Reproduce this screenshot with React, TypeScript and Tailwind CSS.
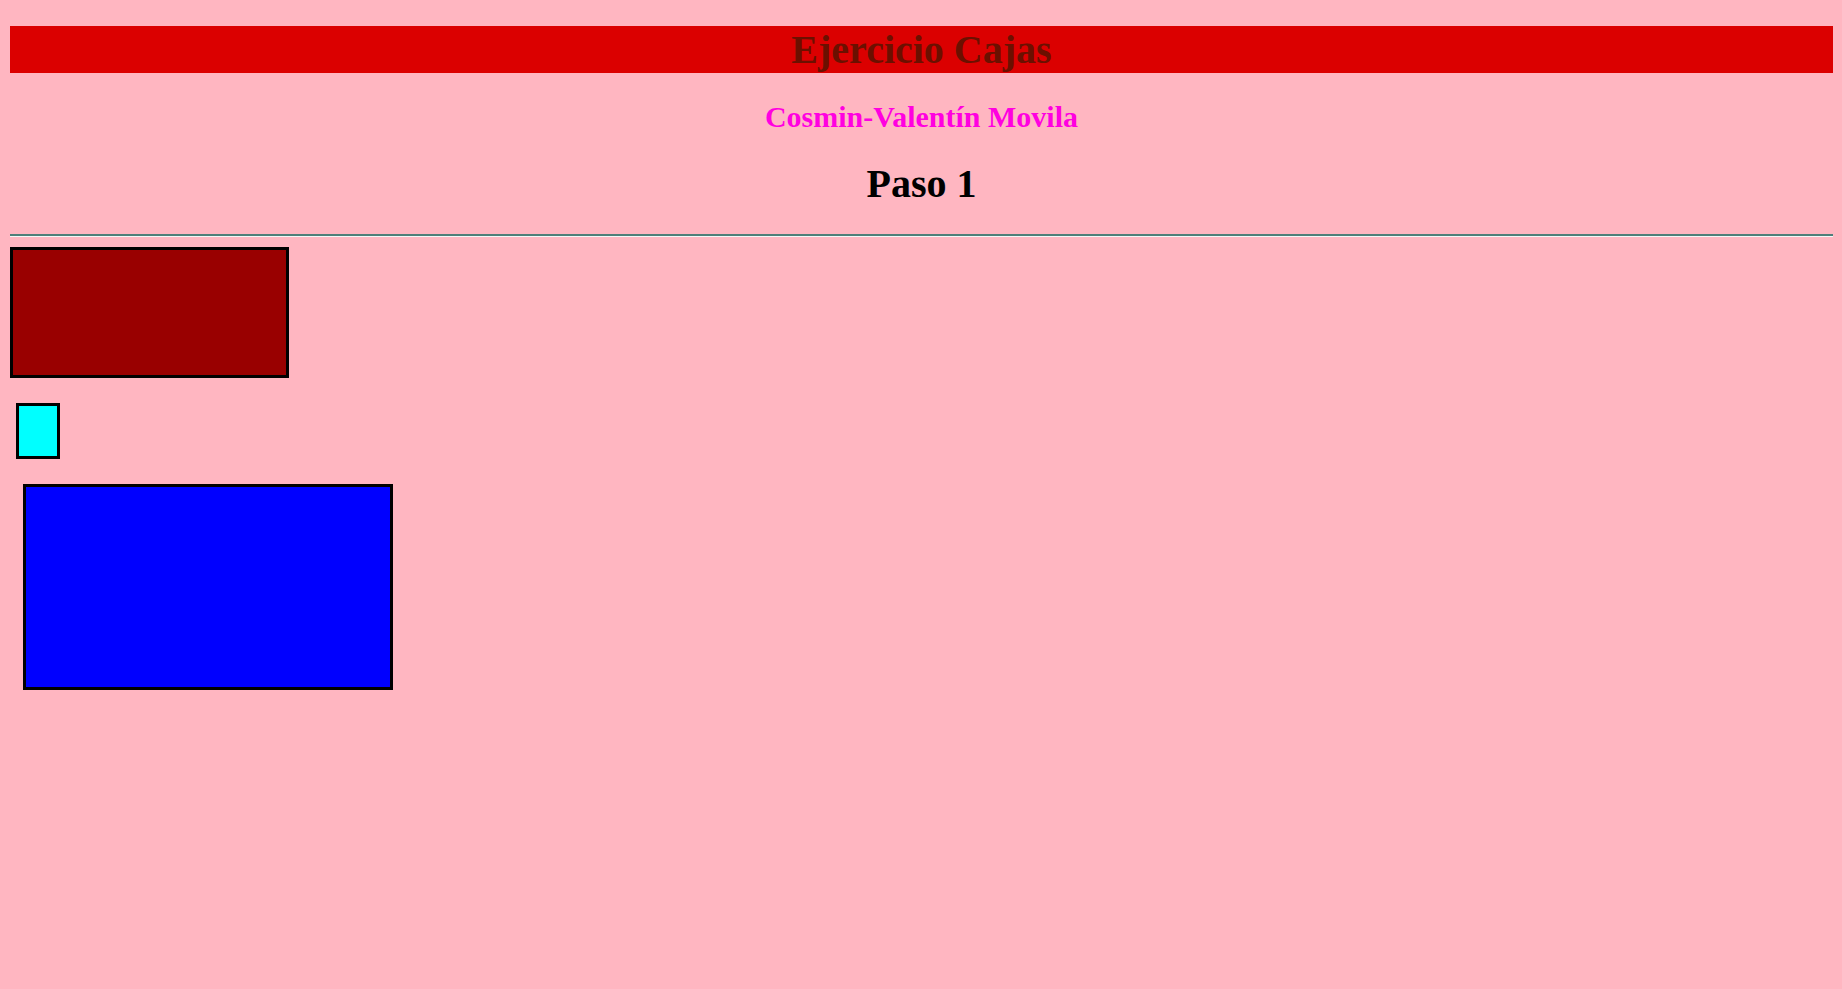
export default function App() {
  return (
    <div className="min-h-screen bg-[#ffb6c1] pl-[10px] pr-[9px] pt-[26px] pb-[20px] font-['Liberation_Serif',serif]">
      {/* titulo */}
      <h1 className="h-[47px] bg-[#db0000] text-center text-[40px] font-bold leading-[47px] text-[#6b1000]">
        Ejercicio Cajas
      </h1>
      <h2 className="mt-[26px] h-[35px] text-center text-[30px] font-bold leading-[35px] text-[#ff00e0]">
        Cosmin-Valentín Movila
      </h2>
      <h1 className="mt-[27px] h-[46px] text-center text-[40px] font-bold leading-[46px] text-black">
        Paso 1
      </h1>
      <hr className="mt-[27px] h-[3px] border-0 border-t-2 border-b border-t-[#4f7f7a] border-b-[#f2f7f7]" />

      {/* cajas */}
      <div className="mt-[10px] h-[131px] w-[279px] border-[3px] border-black bg-[#990000]" />
      <div className="ml-[6px] mt-[25px] h-[56px] w-[44px] border-[3px] border-black bg-[#00ffff]" />
      <div className="ml-[13px] mt-[25px] h-[206px] w-[370px] border-[3px] border-black bg-[#0000ff]" />
    </div>
  );
}
